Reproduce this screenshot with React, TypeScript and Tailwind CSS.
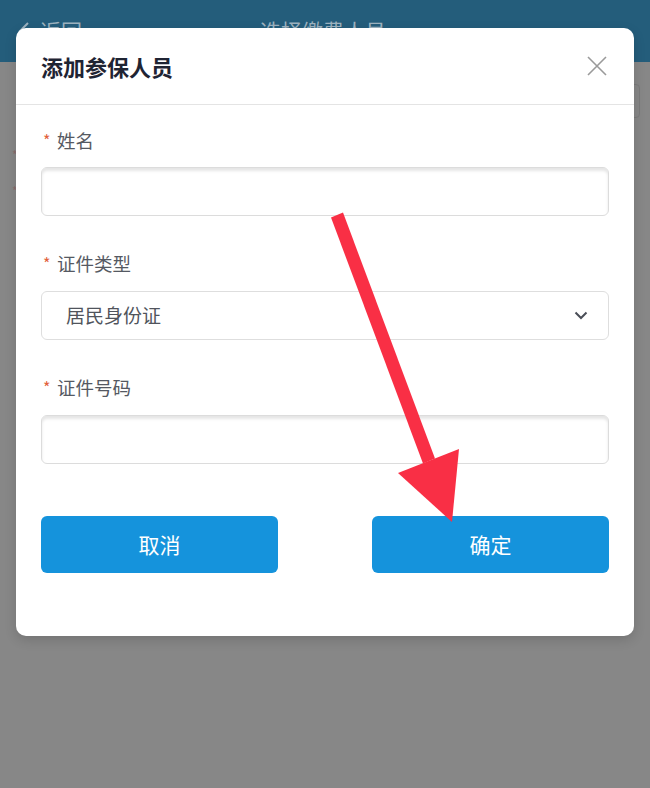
import React from 'react';

const cjk = { fontFamily: '"Noto Sans CJK SC", "Noto Sans", sans-serif' };

function Label({ text }: { text: string }) {
	return (
		<div className="flex items-center h-[24px] text-[18.5px] text-[#555962] leading-none">
			<span className="text-[#e2613c] text-[16px] w-[16px] pl-[2px]">*</span>
			<span>{text}</span>
		</div>
	);
}

function TextInput() {
	return (
		<div className="h-[49px] rounded-[6px] border border-[#dcdcdc] bg-white shadow-[inset_0_3px_3px_rgba(0,0,0,0.10)]" />
	);
}

export default function App() {
	return (
		<div className="relative w-[650px] h-[788px] overflow-hidden bg-[#878787]" style={cjk}>
			{/* page behind the dialog */}
			<div className="h-[62px] bg-[#245d7b] flex items-center px-[18px] text-[#9db2bf] text-[21px]">
				<div className="flex items-center gap-[10px] w-[200px]">
					<svg width="12" height="20" viewBox="0 0 12 20" fill="none">
						<path d="M10 2 L2 10 L10 18" stroke="#9db2bf" strokeWidth="2" />
					</svg>
					<span>返回</span>
				</div>
				<span className="ml-[42px]">选择缴费人员</span>
			</div>
			<div className="flex flex-col pl-[12px] pr-[10px]">
				<div className="flex justify-end mt-[22px]">
					<div className="h-[34px] w-[40px] rounded-[4px] border border-[#7a7a7a]" />
				</div>
				<span className="mt-[28px] text-[#8a6c6c] text-[12px]">*</span>
				<span className="mt-[18px] text-[#8a6c6c] text-[12px]">*</span>
			</div>

			{/* dialog */}
			<div className="absolute left-[16px] top-[28px] w-[618px] rounded-[10px] bg-white shadow-[0_4px_12px_rgba(0,0,0,0.15)]">
				<div className="h-[77px] flex items-center justify-between pl-[25px] pr-[27px] border-b border-[#e4e4e4]">
					<span className="text-[22px] font-bold text-[#1f2433]">添加参保人员</span>
					<svg width="20" height="20" viewBox="0 0 20 20" fill="none">
						<path d="M1 1 L19 19 M19 1 L1 19" stroke="#9a9a9a" strokeWidth="1.6" />
					</svg>
				</div>
				<div className="flex flex-col px-[25px] pt-[23px] pb-[63px]">
					<Label text="姓名" />
					<div className="mt-[15px]">
						<TextInput />
					</div>
					<div className="mt-[35px]">
						<Label text="证件类型" />
					</div>
					<div className="mt-[16px] h-[49px] rounded-[6px] border border-[#dedede] flex items-center justify-between pl-[24px] pr-[20px]">
						<span className="text-[19px] text-[#50545c]">居民身份证</span>
						<svg width="14" height="9" viewBox="0 0 14 9" fill="none">
							<path d="M1.5 1.5 L7 7 L12.5 1.5" stroke="#4a4e57" strokeWidth="2" />
						</svg>
					</div>
					<div className="mt-[35px]">
						<Label text="证件号码" />
					</div>
					<div className="mt-[16px]">
						<TextInput />
					</div>
					<div className="mt-[52px] flex justify-between">
						<button className="w-[237px] h-[57px] rounded-[6px] bg-[#1593dc] text-white text-[21px]">取消</button>
						<button className="w-[237px] h-[57px] rounded-[6px] bg-[#1593dc] text-white text-[21px]">确定</button>
					</div>
				</div>
			</div>

			{/* annotation arrow */}
			<svg className="absolute left-0 top-0 pointer-events-none" width="650" height="788" viewBox="0 0 650 788">
				<polygon points="343,212.5 331,217.5 423,463.5 435,458.5" fill="#f92f45" />
				<polygon points="398,473 459,449 452,522" fill="#f92f45" />
			</svg>
		</div>
	);
}
